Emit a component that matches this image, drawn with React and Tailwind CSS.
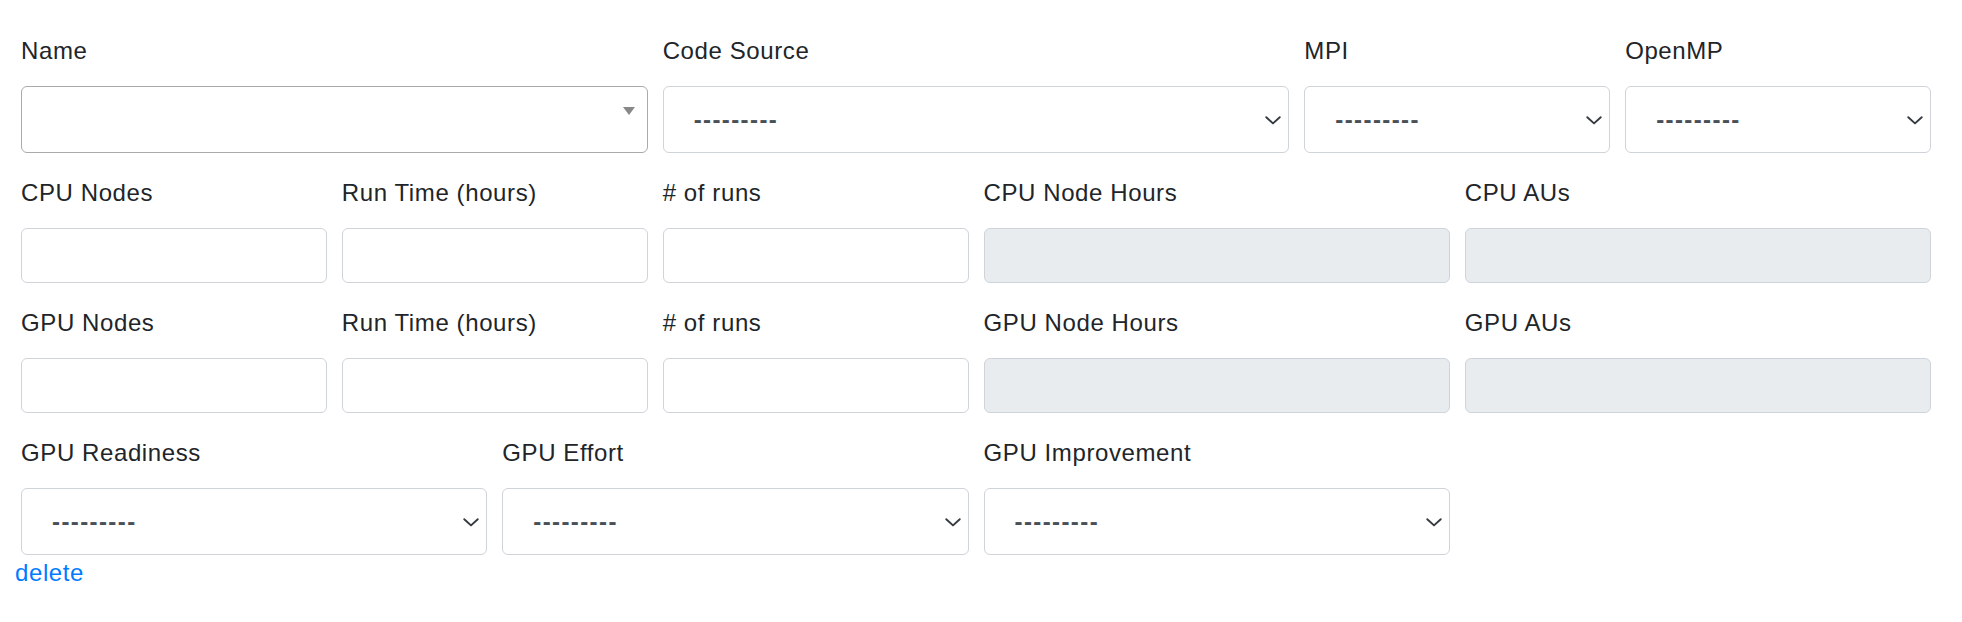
import React from "react";

const font = { fontFamily: '"Liberation Sans", Arial, Helvetica, sans-serif' };

function Label({ children }) {
  return (
    <div className="h-[34px] leading-[34px] mb-[18px] text-[24px] tracking-[0.6px] text-[#212529] whitespace-nowrap">
      {children}
    </div>
  );
}

function Chevron() {
  return (
    <svg width="18" height="18" viewBox="0 0 16 16" fill="none" className="shrink-0">
      <path d="M2 5.5l6 5.5 6-5.5" stroke="#343a40" strokeWidth="1.7" strokeLinecap="round" strokeLinejoin="round" />
    </svg>
  );
}

function SelectBox() {
  return (
    <div className="h-[67px] flex items-center justify-between pl-[30px] pr-[6px] bg-white border border-[#ced4da] rounded-[6px]">
      <span className="text-[24px] tracking-[1.4px] text-[#495057] font-bold leading-none">---------</span>
      <Chevron />
    </div>
  );
}

function NameBox() {
  return (
    <div className="h-[67px] flex items-start justify-end pt-[20px] pr-[12px] bg-white border border-[#aaaaaa] rounded-[6px]">
      <div className="w-0 h-0 border-l-[6.5px] border-r-[6.5px] border-t-[8px] border-l-transparent border-r-transparent border-t-[#888888]" />
    </div>
  );
}

function TextBox({ disabled }) {
  return (
    <div
      className={
        "h-[55px] border border-[#ced4da] rounded-[6px] " +
        (disabled ? "bg-[#e9ecef]" : "bg-white")
      }
    />
  );
}

function Field({ span, label, children }) {
  return (
    <div className={span}>
      <Label>{label}</Label>
      {children}
    </div>
  );
}

export default function App() {
  return (
    <div className="w-[1962px] h-[622px] bg-white pt-[34px] pl-[21px] pr-[31px]" style={font}>
      <div className="grid grid-cols-12 gap-x-[15px]">
        <Field span="col-span-4" label="Name"><NameBox /></Field>
        <Field span="col-span-4" label="Code Source"><SelectBox /></Field>
        <Field span="col-span-2" label="MPI"><SelectBox /></Field>
        <Field span="col-span-2" label="OpenMP"><SelectBox /></Field>
      </div>
      <div className="grid grid-cols-12 gap-x-[15px] mt-[23px]">
        <Field span="col-span-2" label="CPU Nodes"><TextBox /></Field>
        <Field span="col-span-2" label="Run Time (hours)"><TextBox /></Field>
        <Field span="col-span-2" label="# of runs"><TextBox /></Field>
        <Field span="col-span-3" label="CPU Node Hours"><TextBox disabled /></Field>
        <Field span="col-span-3" label="CPU AUs"><TextBox disabled /></Field>
      </div>
      <div className="grid grid-cols-12 gap-x-[15px] mt-[23px]">
        <Field span="col-span-2" label="GPU Nodes"><TextBox /></Field>
        <Field span="col-span-2" label="Run Time (hours)"><TextBox /></Field>
        <Field span="col-span-2" label="# of runs"><TextBox /></Field>
        <Field span="col-span-3" label="GPU Node Hours"><TextBox disabled /></Field>
        <Field span="col-span-3" label="GPU AUs"><TextBox disabled /></Field>
      </div>
      <div className="grid grid-cols-12 gap-x-[15px] mt-[23px]">
        <Field span="col-span-3" label="GPU Readiness"><SelectBox /></Field>
        <Field span="col-span-3" label="GPU Effort"><SelectBox /></Field>
        <Field span="col-span-3" label="GPU Improvement"><SelectBox /></Field>
      </div>
      <div className="mt-[1px] -ml-[6px] h-[34px] leading-[34px]">
        <a href="#" className="text-[24px] tracking-[0.6px] text-[#007bff]">delete</a>
      </div>
    </div>
  );
}
